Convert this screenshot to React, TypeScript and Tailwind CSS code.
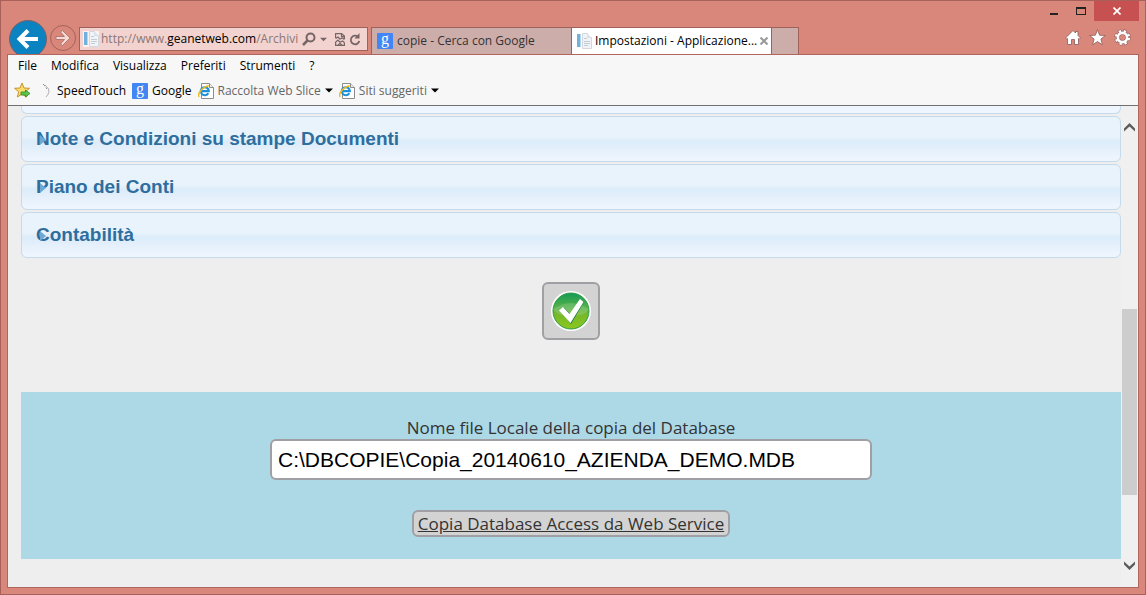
import { useState } from "react";
import type { ReactNode } from "react";

const SECTIONS = ["Note e Condizioni su stampe Documenti", "Piano dei Conti", "Contabilità"];

const MENUS = ["File", "Modifica", "Visualizza", "Preferiti", "Strumenti", "?"];

function PageIcon() {
  return (
    <svg width="16" height="16" viewBox="0 0 16 16" className="shrink-0" aria-hidden="true">
      <rect x="0" y="0" width="16" height="16" fill="#fff" fillOpacity="0.7" />
      <rect x="1" y="1" width="3" height="13" fill="#6fb2dd" />
      <rect x="4" y="1" width="1" height="13" fill="#b5d7ee" />
      <path d="M6.5 .5h5v4h4v11h-9z" fill="#f1f3f6" stroke="#d3d8df" />
      <path d="M11.500 .5v4h4z" fill="#dfe5ee" />
      <path d="M8 5.500h3M8 8.500h6M8 10.500h6M8 12.500h4" stroke="#c3cbd4" />
    </svg>
  );
}

function GoogleIcon() {
  return (
    <span className="h-4 w-4 shrink-0 rounded-[1px] bg-[#4285f4] text-center font-['Liberation_Serif',serif] text-base leading-3 text-white">
      g
    </span>
  );
}

function ExplorerIcon() {
  return (
    <svg width="16" height="16" viewBox="0 0 16 16" className="shrink-0" aria-hidden="true">
      <path d="M3.500 .5h8l4 4v11h-12z" fill="#fff" stroke="#8c8c8c" />
      <path d="M11.500 .5v4h4" fill="#eee" stroke="#8c8c8c" />
      <path d="M10.300 10.200A4 4 0 1 1 10.800 8.200H3.500" fill="none" stroke="#1b8fdb" strokeWidth="2.200" />
      <path d="M1.300 13.800C-1 12 3 4.500 10.800 2.800" fill="none" stroke="#f2bb1d" strokeWidth="1.500" />
    </svg>
  );
}

function Caret({ className }: { className: string }) {
  return (
    <svg width="8" height="5" viewBox="0 0 8 5" className={className} aria-hidden="true">
      <path d="M0 0.500h8L4 4.500z" fill="currentColor" />
    </svg>
  );
}

function NavButtons() {
  return (
    <>
      <button aria-label="Indietro" className="ml-0.5 h-[34px] w-[38px] overflow-hidden">
        <svg width="38" height="38" viewBox="0 0 38 38">
          <circle cx="19" cy="19" r="18.500" fill="#0c83c1" stroke="#7d5f68" />
          <path d="M29 19H11M19 10.500L10.500 19L19 27.500" fill="none" stroke="#fff" strokeWidth="4" />
        </svg>
      </button>
      <button aria-label="Avanti" className="mb-0.5 ml-0.5 size-7">
        <svg width="28" height="28" viewBox="0 0 28 28">
          <circle cx="14" cy="14" r="12.500" fill="none" stroke="#a3625c" />
          <path
            d="M7 12.500h8.500l-4-4.500l2-1.500l7.500 7.500l-7.500 7.500l-2-1.500l4-4.500H7z"
            fill="#f4d9d5"
            stroke="#a96b65"
            strokeWidth="0.800"
          />
        </svg>
      </button>
    </>
  );
}

function AddressBar() {
  return (
    <div className="mb-[3px] ml-0.5 flex h-6 w-[289px] items-center border border-[#a0615b] bg-[#f2d3cf] pr-1.5 pl-[3px] text-[#766565]">
      <PageIcon />
      <div role="textbox" aria-label="Indirizzo" className="ml-0.5 flex-1 whitespace-nowrap text-[#8b7774]">
        http://www.<span className="text-black">geanetweb.com</span>/Archivi
      </div>
      <button aria-label="Cerca">
        <svg width="14" height="14" viewBox="0 0 14 14">
          <circle cx="8.500" cy="5.500" r="4" fill="none" stroke="currentColor" strokeWidth="2" />
          <path d="M5.500 8.500L1 13" stroke="currentColor" strokeWidth="2.500" />
        </svg>
      </button>
      <button aria-label="Mostra completamento automatico" className="ml-1">
        <Caret className="block w-[7px]" />
      </button>
      <button aria-label="Visualizzazione compatibilità" className="ml-2">
        <svg width="10" height="13" viewBox="0 0 10 13" fill="none" stroke="currentColor" strokeWidth="1.200">
          <path d="M.6 5V.6h6l2.800 2.400V6M6.500 .6v3h3M.6 9v3.400h8.800V9.500" />
          <path d="M.6 5.500L3 4L5 6L7.500 5L9.400 6.500M.6 9L3 7L5 9.200L7.500 8L9.400 9.500M3 12L5 10.500L7 12" />
        </svg>
      </button>
      <button aria-label="Aggiorna" className="ml-1">
        <svg width="12" height="13" viewBox="0 0 12 13">
          <path d="M9 3.800A4.300 4.300 0 1 0 10.300 8" fill="none" stroke="currentColor" strokeWidth="1.800" />
          <path d="M10.500 0v5.500H5.500z" fill="currentColor" />
        </svg>
      </button>
    </div>
  );
}

function WindowTools() {
  return (
    <div className="ml-auto flex flex-col items-end self-stretch">
      <div className="flex h-5 items-stretch">
        <button aria-label="Riduci a icona" className="flex w-7 items-center justify-center pt-1.5">
          <span className="h-0.5 w-2 bg-[#222]" />
        </button>
        <button aria-label="Ingrandisci" className="flex w-[26px] items-center justify-center">
          <span className="h-2 w-2.5 border border-t-2 border-[#222]" />
        </button>
        <button aria-label="Chiudi" className="flex w-[45px] items-center justify-center bg-[#c75050]">
          <svg width="8" height="8" viewBox="0 0 8 8">
            <path d="M.5 .5l7 7M7.500 .5l-7 7" stroke="#fff" strokeWidth="1.700" />
          </svg>
        </button>
      </div>
      <div className="mt-2 mr-2 flex items-center gap-2">
        <button aria-label="Home">
          <svg width="16" height="17" viewBox="0 0 16 17">
            <path
              d="M8 1.500L10.500 4V2.500H13V6.500L15.500 9L14.500 10L13.500 9.500V15.500H9.500V10.500H6.500V15.500H2.500V9.500L1.500 10L.5 9z"
              fill="#fff"
              stroke="#8c5b59"
              strokeWidth="0.800"
            />
          </svg>
        </button>
        <button aria-label="Preferiti">
          <svg width="17" height="17" viewBox="0 0 17 17">
            <path
              d="M8.500 .8L10.600 6.200L16.300 6.500L11.900 10.100L13.400 15.800L8.500 12.600L3.600 15.800L5.100 10.100L.7 6.500L6.400 6.200z"
              fill="#fff"
              stroke="#8c5b59"
              strokeWidth="0.800"
            />
          </svg>
        </button>
        <button aria-label="Strumenti">
          <svg width="17" height="17" viewBox="0 0 17 17" fill="none">
            <circle cx="8.500" cy="8.500" r="6.500" stroke="#8c5b59" strokeWidth="3.400" strokeDasharray="3.300 1.805" />
            <circle cx="8.500" cy="8.500" r="4.600" stroke="#8c5b59" strokeWidth="3.600" />
            <circle cx="8.500" cy="8.500" r="6.500" stroke="#fff" strokeWidth="2.400" strokeDasharray="2.300 2.805" strokeDashoffset="-0.500" />
            <circle cx="8.500" cy="8.500" r="4.600" stroke="#fff" strokeWidth="2.600" />
          </svg>
        </button>
      </div>
    </div>
  );
}

function Favorite({ icon, children, menu }: { icon: ReactNode; children: ReactNode; menu?: boolean }) {
  return (
    <a href="#" className={`flex items-center gap-1 ${menu ? "text-[#666]" : "text-black"}`}>
      {icon}
      {children}
      {menu && <Caret className="text-black" />}
    </a>
  );
}

function FavoritesBar() {
  return (
    <div className="flex h-[29px] items-center gap-1.5 px-1.5">
      <button aria-label="Aggiungi a Preferiti">
        <svg width="17" height="17" viewBox="0 0 17 17">
          <path
            d="M8 1L10 6L15.500 6.300L11.300 9.800L12.700 15L8 12.200L3.300 15L4.700 9.800L.5 6.300L6 6z"
            fill="#fbdc6c"
            stroke="#c8942c"
          />
          <path d="M7 10h4.500v-2l4.500 3.500l-4.500 3.500v-2H7z" fill="#5cc74a" stroke="#2a8a2c" strokeWidth="0.800" />
        </svg>
      </button>
      <Favorite
        icon={
          <svg width="16" height="16" viewBox="0 0 16 16" fill="none" aria-hidden="true">
            <path d="M8 2Q13 6 12 9T9 14" stroke="#b0b0b0" />
            <path d="M6 1l2 2M9 4.500l1 1.500" stroke="#888" />
          </svg>
        }
      >
        SpeedTouch
      </Favorite>
      <Favorite icon={<GoogleIcon />}>Google</Favorite>
      <Favorite icon={<ExplorerIcon />} menu>
        Raccolta Web Slice
      </Favorite>
      <Favorite icon={<ExplorerIcon />} menu>
        Siti suggeriti
      </Favorite>
    </div>
  );
}

function Scrollbar() {
  return (
    <div className="flex w-[17px] shrink-0 flex-col items-center bg-[#f0f0f0] py-[17px]">
      <svg width="11" height="10" viewBox="0 0 11 10" aria-hidden="true">
        <path d="M0 8.500V5.500L5.500 0L11 5.500V8.500L5.500 3.500z" fill="#5c5c5c" />
      </svg>
      <div className="grow-[176]" />
      <div className="w-[15px] grow-[186] bg-[#cdcdcd]" />
      <div className="grow-[65]" />
      <svg width="11" height="10" viewBox="0 0 11 10" aria-hidden="true">
        <path d="M0 1.500V4.500L5.500 10L11 4.500V1.500L5.500 6.500z" fill="#5c5c5c" />
      </svg>
    </div>
  );
}

export default function App() {
  const [fileName, setFileName] = useState("C:\\DBCOPIE\\Copia_20140610_AZIENDA_DEMO.MDB");

  return (
    <div className="flex min-h-screen flex-col border border-[#a8605a] bg-[#d9877b] px-1.5 pb-1.5 font-['Open_Sans','Noto_Sans',sans-serif] text-xs text-black">
      <header className="flex h-[53px] items-end">
        <NavButtons />
        <AddressBar />
        <div role="tablist" className="ml-[3px] flex h-[27px] border-x border-t border-[#a0615b] bg-[#cdadaa]">
          <button role="tab" className="flex w-[199px] items-center gap-1 pl-[5px] text-[#333]">
            <GoogleIcon />
            copie - Cerca con Google
          </button>
          <div className="flex w-[201px] items-center gap-[3px] border-x border-[#a0615b] bg-white px-1">
            <PageIcon />
            <button role="tab" aria-selected="true" className="flex-1 text-left whitespace-nowrap">
              Impostazioni - Applicazione...
            </button>
            <button aria-label="Chiudi scheda">
              <svg width="8" height="8" viewBox="0 0 8 8">
                <path d="M.5 .5l7 7M7.500 .5l-7 7" stroke="#999" strokeWidth="2" />
              </svg>
            </button>
          </div>
          <button aria-label="Nuova scheda" className="w-[26px]" />
        </div>
        <WindowTools />
      </header>

      <div className="flex flex-1 flex-col border border-[#b0665f] bg-[#f7f7f7]">
        <nav className="flex h-[21px] items-center gap-3.5 px-2.5">
          {MENUS.map((m) => (
            <button key={m}>{m}</button>
          ))}
        </nav>
        <FavoritesBar />

        <div className="flex flex-1 overflow-hidden bg-[#eee]">
          <main className="flex-1 border-t border-[#707070] pl-[13px]">
            <div className="mb-0.5 h-2 rounded-b-md border border-t-0 border-[#c5dbec] bg-[#eef5fe]" />
            <div className="flex flex-col gap-0.5">
              {SECTIONS.map((title) => (
                <h3 key={title}>
                  <button className="relative block h-[46px] w-full rounded-md border border-[#c5dbec] bg-linear-to-b from-[#e8f3fc] from-45% via-[#dcecf9] via-55% to-[#f0f6ff] px-3.5 text-left font-['Liberation_Sans',Arial,sans-serif] text-[19px] font-bold text-[#2e6e9e]">
                    {title}
                    <svg
                      width="6"
                      height="10"
                      viewBox="0 0 6 10"
                      className="absolute top-[18px] left-[18px]"
                      aria-hidden="true"
                    >
                      <path d="M0 0L6 5L0 10z" fill="#6da8d5" />
                    </svg>
                  </button>
                </h3>
              ))}
            </div>

            <div className="flex justify-center py-6">
              <button
                aria-label="Conferma"
                className="flex size-[58px] items-center justify-center rounded-md border-2 border-[#a0a0a4] bg-[#d3d3d3]"
              >
                <svg width="40" height="40" viewBox="0 0 40 40">
                  <defs>
                    <linearGradient id="ok" x1="0" y1="0" x2="0" y2="1">
                      <stop offset="0" stopColor="#149a56" />
                      <stop offset="0.450" stopColor="#5fb548" />
                      <stop offset="0.600" stopColor="#76b82a" />
                      <stop offset="1" stopColor="#8cc81e" />
                    </linearGradient>
                  </defs>
                  <circle cx="20" cy="20" r="20" fill="#fff" />
                  <circle cx="20" cy="20" r="18" fill="url(#ok)" stroke="#2f9c48" />
                  <path d="M2.500 18Q20 6 37.500 18Q34 26 20 24Q6 26 2.500 18z" fill="#fff" fillOpacity="0.150" />
                  <path d="M9 19.500L13 16.500L19 23L29.500 9L33 11L20 33z" fill="#187a45" />
                  <path d="M8 19.500L12 16L18.500 23L29 8L32.500 11L19.500 32z" fill="#fff" />
                </svg>
              </button>
            </div>

            <form
              className="mt-7 flex flex-col items-center bg-[#add8e6] pt-6 pb-[22px] text-[17px] text-[#333]"
              onSubmit={(e) => e.preventDefault()}
            >
              <label htmlFor="db-file" className="leading-[23px]">
                Nome file Locale della copia del Database
              </label>
              <input
                id="db-file"
                value={fileName}
                onChange={(e) => setFileName(e.target.value)}
                className="h-[41px] w-full max-w-[602px] rounded-md border-2 border-[#a0a0a4] bg-white px-1.5 font-['Liberation_Sans',Arial,sans-serif] text-[21px] text-black"
              />
              <a
                href="#"
                className="mt-[30px] rounded-md border-2 border-[#a0a0a4] bg-[#d3d3d3] px-1 leading-[23px] underline"
              >
                Copia Database Access da Web Service
              </a>
            </form>
          </main>
          <div className="flex border-t border-[#707070]">
            <Scrollbar />
          </div>
        </div>
      </div>
    </div>
  );
}
